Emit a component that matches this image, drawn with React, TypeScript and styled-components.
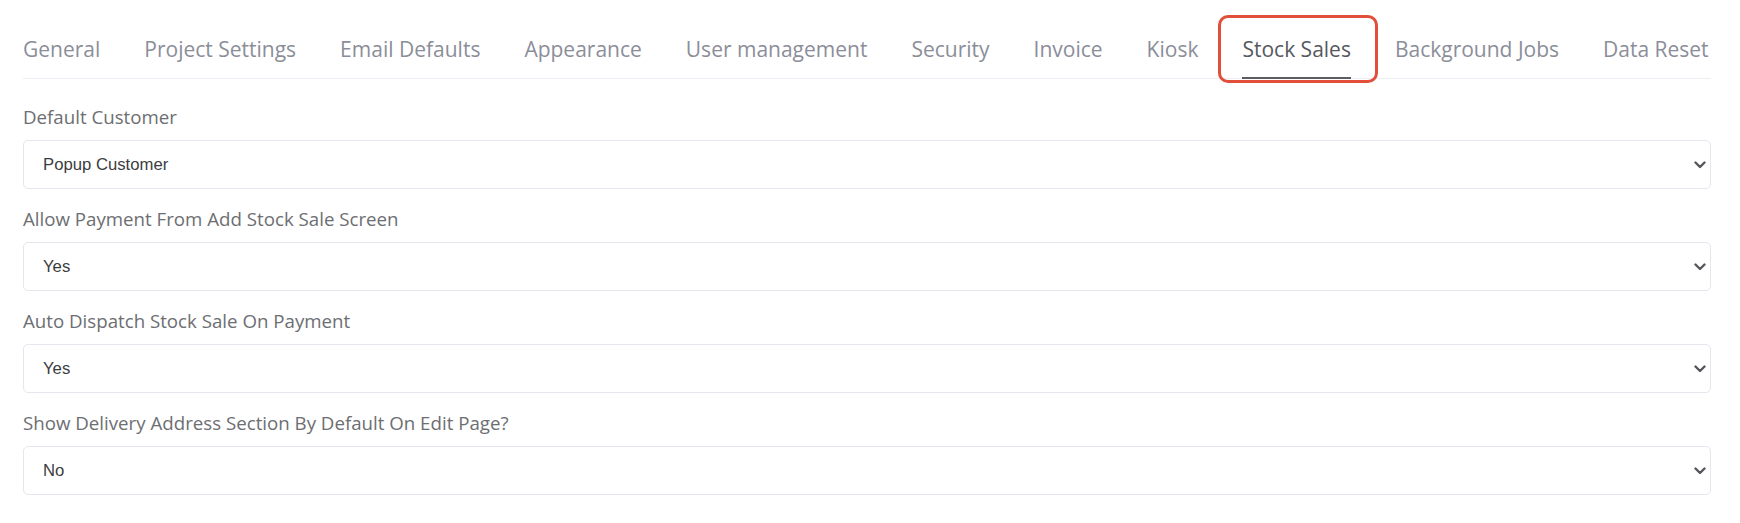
import React, { useState } from "react";
import styled, { createGlobalStyle } from "styled-components";

const GlobalStyle = createGlobalStyle`
  html, body {
    margin: 0;
    padding: 0;
    background: #fff;
  }
  body {
    font-family: "Open Sans", "Liberation Sans", sans-serif;
  }
`;

const Page = styled("div")`
  padding: 0 29px 0 23px;
  background: #fff;
`;

const TabNav = styled("nav")`
  display: flex;
  gap: 44px;
  border-bottom: 1px solid #eceef3;
  white-space: nowrap;
`;

const Tab = styled("div")<{ $active?: boolean }>`
  position: relative;
  padding: 37px 0 17px;
  font-size: 21px;
  line-height: 24px;
  color: ${(p) => (p.$active ? "#56585e" : "#8b8e99")};
  cursor: pointer;

  ${(p) =>
    p.$active &&
    `
    &::after {
      content: "";
      position: absolute;
      left: 0;
      right: 0;
      bottom: -1px;
      height: 2px;
      background: #5b5d63;
    }
    &::before {
      content: "";
      position: absolute;
      left: -24px;
      right: -27px;
      top: 15px;
      bottom: -5px;
      border: 3px solid #e14f3b;
      border-radius: 10px;
    }
  `}
`;

const Form = styled("div")`
  padding-top: 27px;
`;

const Group = styled("div")`
  margin-bottom: 19px;
`;

const Label = styled("label")`
  display: block;
  font-size: 18.7px;
  line-height: 22px;
  color: #6d6e72;
  margin-bottom: 12px;
`;

const SelectWrap = styled("div")`
  position: relative;
`;

const Select = styled("select")`
  display: block;
  width: 100%;
  height: 49px;
  box-sizing: border-box;
  padding: 0 40px 0 19px;
  border: 1px solid #e5e7ee;
  border-radius: 5px;
  background: #fff;
  font-family: "Liberation Sans", Arial, sans-serif;
  font-size: 16.7px;
  color: #3c3d41;
  appearance: none;
  -webkit-appearance: none;
  outline: none;
`;

const Chevron = styled("svg")`
  position: absolute;
  right: 5px;
  top: 50%;
  margin-top: -4px;
  pointer-events: none;
`;

const tabs = [
  "General",
  "Project Settings",
  "Email Defaults",
  "Appearance",
  "User management",
  "Security",
  "Invoice",
  "Kiosk",
  "Stock Sales",
  "Background Jobs",
  "Data Reset",
];

const fields = [
  { label: "Default Customer", value: "Popup Customer", options: ["Popup Customer"] },
  { label: "Allow Payment From Add Stock Sale Screen", value: "Yes", options: ["Yes", "No"] },
  { label: "Auto Dispatch Stock Sale On Payment", value: "Yes", options: ["Yes", "No"] },
  { label: "Show Delivery Address Section By Default On Edit Page?", value: "No", options: ["Yes", "No"] },
];

function App() {
  const [active, setActive] = useState("Stock Sales");
  return (
    <>
      <GlobalStyle />
      <Page>
        <TabNav>
          {tabs.map((t) => (
            <Tab key={t} $active={t === active} onClick={() => setActive(t)}>
              {t}
            </Tab>
          ))}
        </TabNav>
        <Form>
          {fields.map((f) => (
            <Group key={f.label}>
              <Label>{f.label}</Label>
              <SelectWrap>
                <Select defaultValue={f.value}>
                  {f.options.map((o) => (
                    <option key={o}>{o}</option>
                  ))}
                </Select>
                <Chevron width="12" height="8" viewBox="0 0 12 8">
                  <path d="M1.5 1.5 L6 6 L10.5 1.5" fill="none" stroke="#55565c" strokeWidth="2.4" strokeLinecap="round" strokeLinejoin="round" />
                </Chevron>
              </SelectWrap>
            </Group>
          ))}
        </Form>
      </Page>
    </>
  );
}

export default App;
